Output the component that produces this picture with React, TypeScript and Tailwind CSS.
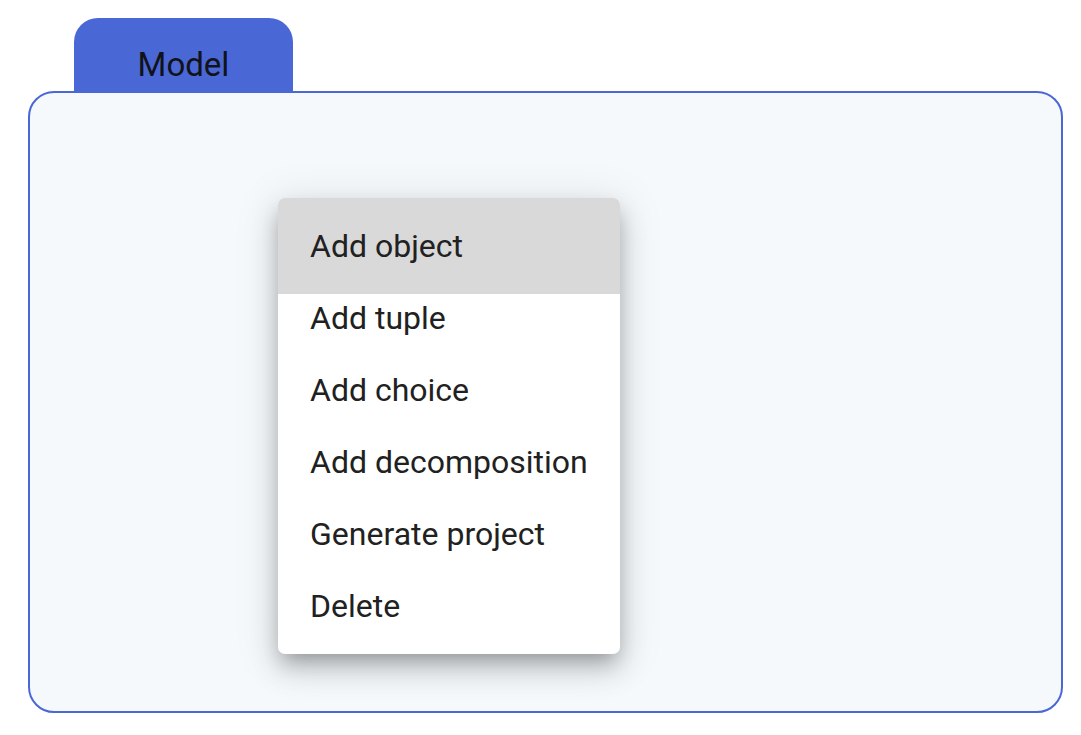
import React from "react";

export default function App() {
  const items = ["Add tuple", "Add choice", "Add decomposition", "Generate project", "Delete"];
  return (
    <div className="w-[1081px] h-[735px] bg-white relative" style={{ fontFamily: "Roboto, 'Liberation Sans', sans-serif" }}>
      <div className="absolute left-[74px] top-[18px] w-[219px] h-[76px] bg-[#4a67d6] rounded-t-[24px] flex justify-center pt-[27px]">
        <span className="text-[33px] leading-[40px] text-[#111318]">Model</span>
      </div>
      <div className="absolute left-[28px] top-[91px] w-[1035px] h-[622px] border-2 border-[#4a67d6] rounded-[26px] bg-[#f5f9fc]" />
      <div className="absolute left-[278px] top-[198px] w-[342px] bg-white rounded-[7px] pb-3 overflow-hidden shadow-[0_10px_20px_-6px_rgba(0,0,0,0.3),0_16px_28px_2px_rgba(0,0,0,0.12),0_6px_40px_8px_rgba(0,0,0,0.08)]">
        <div className="h-[96px] bg-[#d9d9d9] flex items-center pl-[32px] text-[32px] text-[#212121]">Add object</div>
        <div className="-mt-3">
          {items.map((t) => (
            <div key={t} className="h-[72px] flex items-center pl-[32px] text-[32px] text-[#212121]">
              {t}
            </div>
          ))}
        </div>
      </div>
    </div>
  );
}
